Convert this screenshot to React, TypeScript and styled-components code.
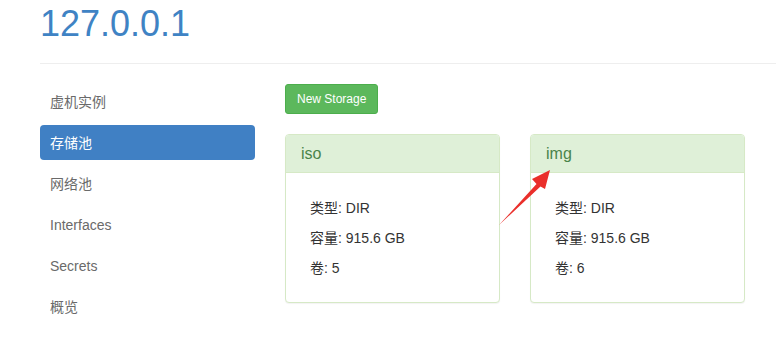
import React from "react";
import styled, { createGlobalStyle } from "styled-components";

const GlobalStyle = createGlobalStyle`
  html, body {
    margin: 0;
    padding: 0;
    background: #ffffff;
    font-family: "Liberation Sans", "Noto Sans CJK SC", Arial, sans-serif;
    font-size: 14px;
    color: #333333;
  }
  * { box-sizing: border-box; }
`;

const Page = styled.div`
  position: relative;
  width: 776px;
  height: 339px;
  overflow: hidden;
  padding-left: 40px;
`;

const Title = styled.h1`
  margin: 0;
  padding-top: 4px;
  font-size: 36px;
  line-height: 40px;
  font-weight: 400;
  color: #3f83c4;
`;

const Rule = styled.hr`
  margin: 19px 0 20px 0;
  border: 0;
  border-top: 1px solid #eeeeee;
  height: 0;
`;

const Row = styled.div`
  display: flex;
  gap: 30px;
`;

const SideNav = styled.ul`
  list-style: none;
  margin: 0;
  padding: 0;
  width: 215px;
  display: flex;
  flex-direction: column;
  gap: 6px;
`;

const NavItem = styled.li<{ $active?: boolean }>`
  height: 35px;
  line-height: 36px;
  padding: 0 10px;
  border-radius: 4px;
  font-size: 14px;
  color: ${(p) => (p.$active ? "#ffffff" : "#6a6a6a")};
  background: ${(p) => (p.$active ? "#4080c4" : "transparent")};
`;

const Main = styled.div`
  display: flex;
  flex-direction: column;
  align-items: flex-start;
  gap: 20px;
`;

const Button = styled.button`
  height: 30px;
  padding: 0 11px;
  font-family: inherit;
  font-size: 12px;
  line-height: 28px;
  color: #ffffff;
  background: #5cb85c;
  border: 1px solid #4cae4c;
  border-radius: 3px;
`;

const Panels = styled.div`
  display: flex;
  gap: 30px;
`;

const Panel = styled.div`
  width: 215px;
  height: 169px;
  border: 1px solid #d6e9c6;
  border-radius: 4px;
  background: #ffffff;
  box-shadow: 0 1px 1px rgba(0, 0, 0, 0.05);
  overflow: hidden;
`;

const PanelHeading = styled.div`
  height: 38px;
  line-height: 37px;
  padding: 0 15px;
  background: #dff0d8;
  border-bottom: 1px solid #d6e9c6;
  color: #4a844a;
  font-size: 16px;
`;

const PanelBody = styled.ul`
  list-style: none;
  margin: 0;
  padding: 20px 24px 19px 24px;
`;

const InfoLine = styled.li`
  height: 30px;
  line-height: 30px;
  font-size: 14px;
  color: #333333;
`;

const Arrow = styled.svg`
  position: absolute;
  left: 495px;
  top: 165px;
  width: 60px;
  height: 65px;
  pointer-events: none;
`;

const navItems = ["虚机实例", "存储池", "网络池", "Interfaces", "Secrets", "概览"];

const pools = [
  { name: "iso", type: "DIR", size: "915.6 GB", volumes: 5 },
  { name: "img", type: "DIR", size: "915.6 GB", volumes: 6 },
];

export default function App() {
  return (
    <>
      <GlobalStyle />
      <Page>
        <Title>127.0.0.1</Title>
        <Rule />
        <Row>
          <SideNav>
            {navItems.map((n) => (
              <NavItem key={n} $active={n === "存储池"}>
                {n}
              </NavItem>
            ))}
          </SideNav>
          <Main>
            <Button>New Storage</Button>
            <Panels>
              {pools.map((p) => (
                <Panel key={p.name}>
                  <PanelHeading>{p.name}</PanelHeading>
                  <PanelBody>
                    <InfoLine>类型: {p.type}</InfoLine>
                    <InfoLine>容量: {p.size}</InfoLine>
                    <InfoLine>卷: {p.volumes}</InfoLine>
                  </PanelBody>
                </Panel>
              ))}
            </Panels>
          </Main>
        </Row>
        <Arrow viewBox="495 165 60 65">
          <polygon
            points="499,225 536.5,184 532,179 550,170 545,189 540.5,186.5"
            fill="#ea2f2b"
          />
        </Arrow>
      </Page>
    </>
  );
}
